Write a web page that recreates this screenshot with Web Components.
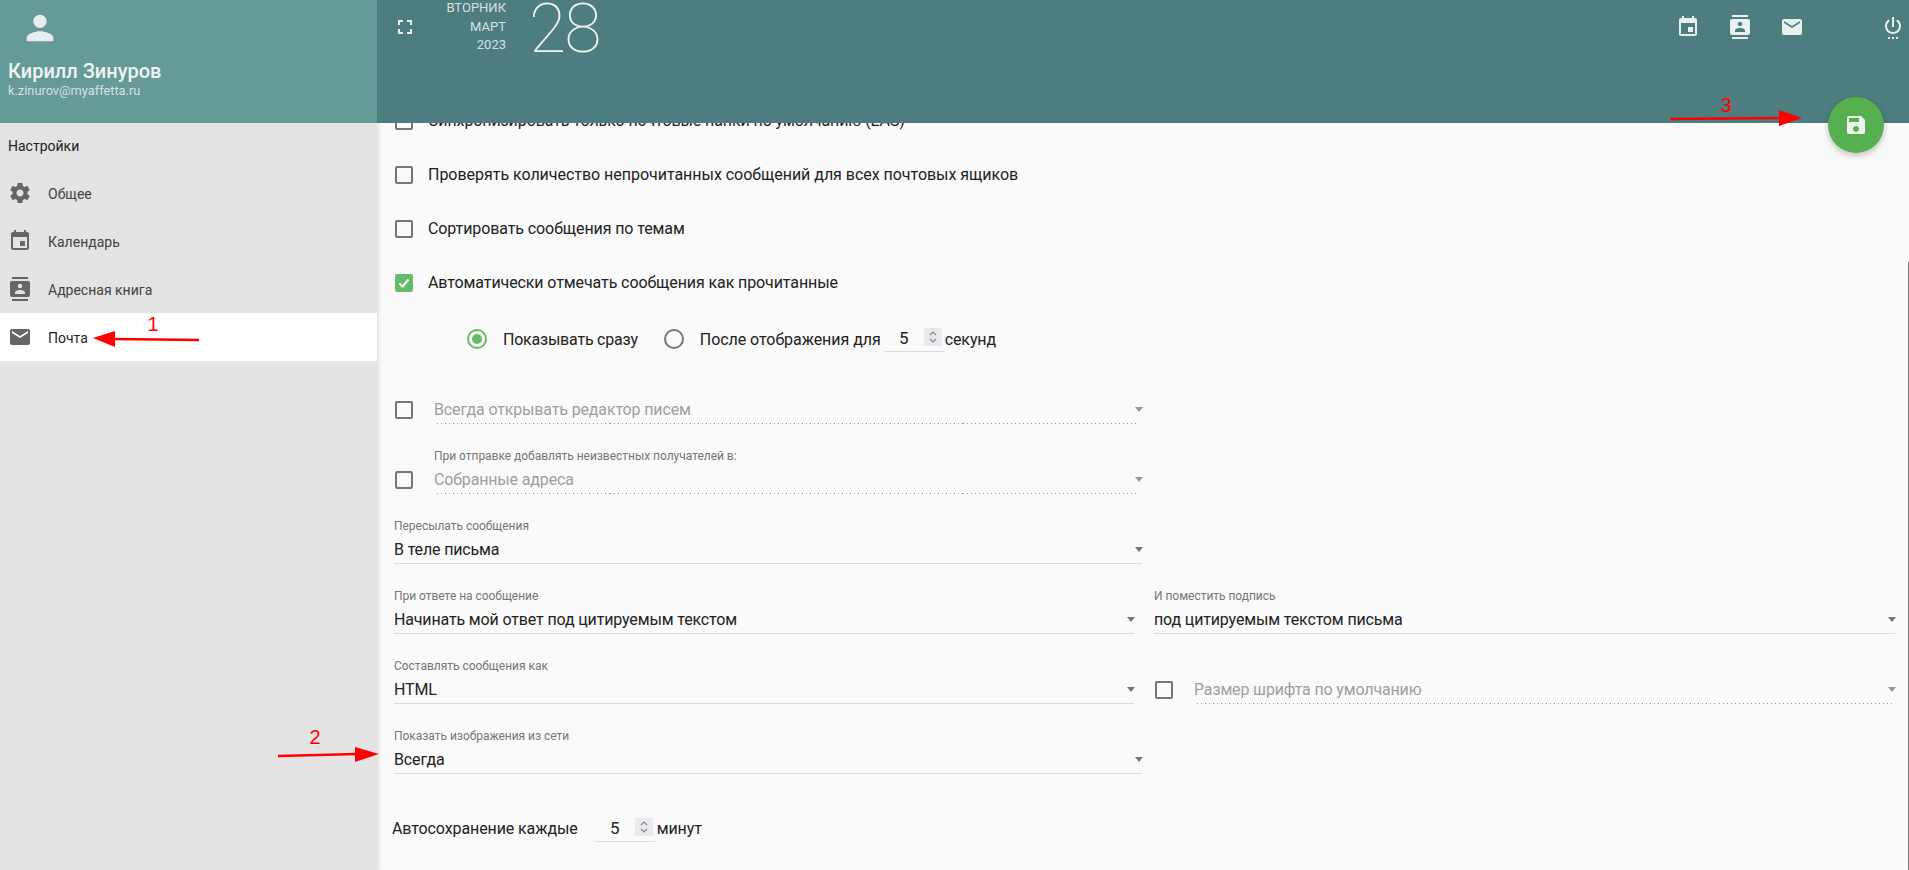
<!DOCTYPE html>
<html lang="ru">
<head>
<meta charset="utf-8">
<title>Настройки</title>
<style>
  html, body { margin: 0; height: 100%; overflow: hidden; }
  body { font-family: Roboto, "Noto Sans", sans-serif; background: #fafafa; }
</style>
</head>
<body>
<mail-settings-app></mail-settings-app>

<script>
const ICONS = {
  person: "M12 12c2.21 0 4-1.79 4-4s-1.79-4-4-4-4 1.79-4 4 1.79 4 4 4zm0 2c-2.67 0-8 1.34-8 4v2h16v-2c0-2.66-5.33-4-8-4z",
  gear: "M19.43 12.98c.04-.32.07-.64.07-.98s-.03-.66-.07-.98l2.11-1.65c.19-.15.24-.42.12-.64l-2-3.46c-.12-.22-.39-.3-.61-.22l-2.49 1c-.52-.4-1.08-.73-1.69-.98l-.38-2.65C14.46 2.18 14.25 2 14 2h-4c-.25 0-.46.18-.49.42l-.38 2.65c-.61.25-1.17.59-1.69.98l-2.49-1c-.23-.09-.49 0-.61.22l-2 3.46c-.13.22-.07.49.12.64l2.11 1.65c-.04.32-.07.65-.07.98s.03.66.07.98l-2.11 1.65c-.19.15-.24.42-.12.64l2 3.46c.12.22.39.3.61.22l2.49-1c.52.4 1.08.73 1.69.98l.38 2.65c.03.24.24.42.49.42h4c.25 0 .46-.18.49-.42l.38-2.65c.61-.25 1.17-.59 1.69-.98l2.49 1c.23.09.49 0 .61-.22l2-3.46c.12-.22.07-.49-.12-.64l-2.11-1.65zM12 15.5c-1.93 0-3.5-1.57-3.5-3.5s1.57-3.5 3.5-3.5 3.5 1.57 3.5 3.5-1.57 3.5-3.5 3.5z",
  event: "M17 12h-5v5h5v-5zM16 1v2H8V1H6v2H5c-1.11 0-1.99.9-1.99 2L3 19c0 1.1.89 2 2 2h14c1.1 0 2-.9 2-2V5c0-1.1-.9-2-2-2h-1V1h-2zm3 18H5V8h14v11z",
  contacts: "M20 0H4v2h16V0zM4 24h16v-2H4v2zM20 4H4c-1.1 0-2 .9-2 2v12c0 1.1.9 2 2 2h16c1.1 0 2-.9 2-2V6c0-1.1-.9-2-2-2zm-8 2.75c1.24 0 2.25 1.01 2.25 2.25s-1.01 2.25-2.25 2.25S9.75 10.24 9.75 9 10.76 6.75 12 6.75zM17 17H7v-1.5c0-1.67 3.33-2.5 5-2.5s5 .83 5 2.5V17z",
  mail: "M20 4H4c-1.1 0-1.99.9-1.99 2L2 18c0 1.1.9 2 2 2h16c1.1 0 2-.9 2-2V6c0-1.1-.9-2-2-2zm0 4l-8 5-8-5V6l8 5 8-5v2z",
  fullscreen: "M7 14H5v5h5v-2H7v-3zm-2-4h2V7h3V5H5v5zm12 7h-3v2h5v-5h-2v3zM14 5v2h3v3h2V5h-5z",
  power: "M7 24h2v-2H7v2zm4 0h2v-2h-2v2zm2-22h-2v10h2V2zm3.56 2.44l-1.45 1.45C16.84 6.94 18 8.83 18 11c0 3.31-2.69 6-6 6s-6-2.69-6-6c0-2.17 1.16-4.06 2.88-5.12L7.44 4.44C5.36 5.88 4 8.28 4 11c0 4.42 3.58 8 8 8s8-3.58 8-8c0-2.72-1.36-5.12-3.44-6.56zM15 24h2v-2h-2v2z",
  save: "M17 3H5c-1.11 0-2 .9-2 2v14c0 1.1.89 2 2 2h14c1.1 0 2-.9 2-2V7l-4-4zm-5 16c-1.66 0-3-1.34-3-3s1.34-3 3-3 3 1.34 3 3-1.34 3-3 3zm3-10H5V5h10v4z"
};

class MdIcon extends HTMLElement {
  constructor() {
    super();
    this.attachShadow({ mode: "open" });
  }

  connectedCallback() {
    const size = this.getAttribute("size") || 24;
    this.shadowRoot.innerHTML = `
      <style>
        :host { display: inline-flex; flex: none; width: ${size}px; height: ${size}px; color: inherit; }
        svg { width: 100%; height: 100%; fill: currentColor; display: block; }
      </style>
      <svg viewBox="0 0 24 24"><path d="${ICONS[this.getAttribute("name")]}"></path></svg>`;
  }
}

class NavItem extends HTMLElement {
  constructor() {
    super();
    this.attachShadow({ mode: "open" });
  }

  connectedCallback() {
    const active = this.hasAttribute("active");
    this.shadowRoot.innerHTML = `
      <style>
        :host {
          display: flex;
          align-items: center;
          gap: 16px;
          height: 48px;
          padding-left: 8px;
          font-size: 14px;
          color: ${active ? "#212121" : "#424242"};
          background: ${active ? "#fff" : "transparent"};
        }
        md-icon { color: #666; }
        span { padding-top: 1px; }
      </style>
      <md-icon name="${this.getAttribute("icon")}"></md-icon>
      <span><slot></slot></span>`;
  }
}

class SideBar extends HTMLElement {
  constructor() {
    super();
    this.attachShadow({ mode: "open" });
  }

  connectedCallback() {
    this.shadowRoot.innerHTML = `
      <style>
        :host { display: flex; flex-direction: column; background: #e4e4e4; }
        header {
          height: 123px;
          box-sizing: border-box;
          padding: 8px 8px 0;
          background: #659a96;
          color: #fff;
        }
        md-icon { display: flex; margin-left: 12px; color: #e6efee; }
        .name { font-size: 20px; font-weight: 500; line-height: 24px; margin-top: 11px; color: #f1f6f5; }
        .email { font-size: 12.8px; line-height: 16px; margin-top: 0; color: #d5e4e2; }
        .title { font-size: 14px; color: #212121; line-height: 46px; padding-left: 8px; }
      </style>
      <header>
        <md-icon name="person" size="40"></md-icon>
        <div class="name">Кирилл Зинуров</div>
        <div class="email">k.zinurov@myaffetta.ru</div>
      </header>
      <div class="title">Настройки</div>
      <nav>
        <nav-item icon="gear">Общее</nav-item>
        <nav-item icon="event">Календарь</nav-item>
        <nav-item icon="contacts">Адресная книга</nav-item>
        <nav-item icon="mail" active>Почта</nav-item>
      </nav>`;
  }
}

class TopBar extends HTMLElement {
  constructor() {
    super();
    this.attachShadow({ mode: "open" });
  }

  connectedCallback() {
    this.shadowRoot.innerHTML = `
      <style>
        :host {
          display: flex;
          height: 123px;
          background: #4d7d7e;
          color: #e8f0f0;
          padding-left: 16px;
          position: relative;
          z-index: 2;
        }
        .full { margin-top: 15px; }
        .date {
          display: flex;
          flex-direction: column;
          gap: 2.5px;
          width: 89px;
          text-align: right;
          font-size: 13px;
          line-height: 16px;
          color: #d5e3e2;
        }
        .day {
          font-size: 68px;
          font-weight: 100;
          line-height: 59px;
          letter-spacing: -2px;
          margin-left: 23px;
          color: #f1f6f5;
        }
        .actions { display: flex; margin-left: auto; align-items: flex-start; padding-top: 15px; }
        .actions md-icon { margin-right: 28px; }
        .actions .power { margin: 0 4px 0 49px; }
      </style>
      <md-icon class="full" name="fullscreen"></md-icon>
      <div class="date"><div>ВТОРНИК</div><div>МАРТ</div><div>2023</div></div>
      <div class="day">28</div>
      <div class="actions">
        <md-icon name="event"></md-icon>
        <md-icon name="contacts"></md-icon>
        <md-icon name="mail"></md-icon>
        <md-icon class="power" name="power"></md-icon>
      </div>`;
  }
}

class CheckBox extends HTMLElement {
  constructor() {
    super();
    this.attachShadow({ mode: "open" });
  }

  connectedCallback() {
    const checked = this.hasAttribute("checked");
    this.shadowRoot.innerHTML = `
      <style>
        :host {
          display: block;
          flex: none;
          width: 18px;
          height: 18px;
          box-sizing: border-box;
          border-radius: 2px;
          border: 2px solid ${checked ? "#66bb6a" : "#757575"};
          background: ${checked ? "#66bb6a" : "transparent"};
        }
        svg { display: block; width: 14px; height: 14px; fill: none; stroke: #fff; stroke-width: 2; }
      </style>
      ${checked ? `<svg viewBox="0 0 14 14"><path d="M2.5 7.5l3 3 6-7"></path></svg>` : ""}`;
  }
}

class CheckRow extends HTMLElement {
  constructor() {
    super();
    this.attachShadow({ mode: "open" });
  }

  connectedCallback() {
    this.shadowRoot.innerHTML = `
      <style>
        :host {
          display: flex;
          align-items: center;
          gap: 15px;
          height: 54px;
          padding-left: 1px;
          font-size: 16px;
          color: #212121;
        }
        span { margin-top: -1px; }
      </style>
      <check-box ${this.hasAttribute("checked") ? "checked" : ""}></check-box>
      <span><slot></slot></span>`;
  }
}

class RadioDot extends HTMLElement {
  constructor() {
    super();
    this.attachShadow({ mode: "open" });
  }

  connectedCallback() {
    const on = this.hasAttribute("on");
    this.shadowRoot.innerHTML = `
      <style>
        :host {
          display: flex;
          flex: none;
          align-items: center;
          justify-content: center;
          width: 20px;
          height: 20px;
          box-sizing: border-box;
          border-radius: 50%;
          border: 2px solid ${on ? "#66bb6a" : "#757575"};
        }
        i { width: 10px; height: 10px; border-radius: 50%; background: #66bb6a; }
      </style>
      ${on ? "<i></i>" : ""}`;
  }
}

class NumberBox extends HTMLElement {
  constructor() {
    super();
    this.attachShadow({ mode: "open" });
  }

  connectedCallback() {
    this.shadowRoot.innerHTML = `
      <style>
        :host {
          display: flex;
          flex: none;
          box-sizing: border-box;
          width: 60px;
          height: 30px;
          margin-bottom: 5px;
          padding: 0 2px 0 0;
          border-bottom: 1px solid #dcdcdc;
          font-size: 17px;
          color: #212121;
        }
        .val { flex: 1; text-align: center; line-height: 32px; height: 29px; }
        .spin { width: 18px; height: 18px; margin-top: 6px; background: #e9e9ee; }
        svg { display: block; width: 18px; height: 18px; fill: none; stroke: #85858c; stroke-width: 1.2; }
      </style>
      <div class="val"><slot></slot></div>
      <div class="spin"><svg viewBox="0 0 18 18"><path d="M6 7l3-3 3 3M6 11l3 3 3-3"></path></svg></div>`;
  }
}

class SelectField extends HTMLElement {
  constructor() {
    super();
    this.attachShadow({ mode: "open" });
  }

  connectedCallback() {
    const label = this.getAttribute("label") || "";
    const off = this.hasAttribute("disabled");
    this.shadowRoot.innerHTML = `
      <style>
        :host {
          display: block;
          box-sizing: border-box;
          height: 54px;
          padding-top: 8px;
          min-width: 0;
        }
        .label { height: 16px; line-height: 16px; font-size: 12px; color: #757575; margin-bottom: 3px; letter-spacing: -0.03px; }
        .control {
          display: flex;
          align-items: center;
          justify-content: space-between;
          height: 25px;
          padding-bottom: 1px;
          font-size: 16px;
          letter-spacing: -0.15px;
          border-bottom: 1px solid ${off ? "transparent" : "#dcdcdc"};
          color: ${off ? "#9e9e9e" : "#212121"};
          ${off ? "border-image: repeating-linear-gradient(to right, #999 0 1px, transparent 1px 4px) 1;" : ""}
        }
        .arrow {
          width: 0;
          height: 0;
          border: 4.5px solid transparent;
          border-top: 5px solid ${off ? "#999" : "#757575"};
          border-bottom-width: 0;
          margin-right: ${off ? "-4px" : "-1px"};
        }
      </style>
      <div class="label">${label}</div>
      <div class="control"><span><slot></slot></span><i class="arrow"></i></div>`;
  }
}

class SettingsForm extends HTMLElement {
  constructor() {
    super();
    this.attachShadow({ mode: "open" });
  }

  connectedCallback() {
    this.shadowRoot.innerHTML = `
      <style>
        :host {
          display: block;
          height: 100%;
          overflow: hidden;
          box-sizing: border-box;
          padding: 0 14px 0 17px;
          background: #fafafa;
          box-shadow: inset 4px 0 4px -3px rgba(0,0,0,.14);
          position: relative;
          font-size: 16px;
          color: #212121;
          letter-spacing: -0.1px;
        }
        .scroll { margin-top: -29px; }
        .tight { letter-spacing: -0.03px; }
        .radios { display: flex; align-items: center; height: 60px; padding-left: 73px; margin-top: -1px; margin-bottom: 1px; }
        .radios radio-dot:nth-of-type(2) { margin-left: 26px; }
        .radios span { margin-left: 16px; }
        .radios .first { letter-spacing: -0.22px; }
        .radios .second { letter-spacing: -0.05px; margin-right: 3px; }
        .radios span.last { margin-left: 1px; }
        .row { display: flex; height: 70px; }
        .col { width: 748px; flex: none; }
        .col.half { width: 741px; }
        .col.first { width: 740px; margin-right: 1px; }
        .gap { margin-left: 19px; }
        .with-check { display: flex; }
        .with-check check-box { margin: 31px 21px 0 1px; }
        .with-check select-field { flex: 1; margin-right: 3px; }
        .auto { display: flex; align-items: center; height: 33px; margin: 22px 0 0 -2px; }
        .auto number-box { margin-bottom: 3px; }
        .auto span:first-child { margin-right: 17px; }
        .auto .last { margin-left: 2px; }
      </style>
      <div class="scroll">
        <check-row>Синхронизировать только почтовые папки по умолчанию (EAS)</check-row>
        <check-row class="tight">Проверять количество непрочитанных сообщений для всех почтовых ящиков</check-row>
        <check-row>Сортировать сообщения по темам</check-row>
        <check-row checked>Автоматически отмечать сообщения как прочитанные</check-row>
        <div class="radios">
          <radio-dot on></radio-dot><span class="first">Показывать сразу</span>
          <radio-dot></radio-dot><span class="second">После отображения для</span>
          <number-box>5</number-box><span class="last">секунд</span>
        </div>
        <div class="row"><div class="col with-check"><check-box></check-box><select-field disabled>Всегда открывать редактор писем</select-field></div></div>
        <div class="row"><div class="col with-check"><check-box></check-box><select-field disabled label="При отправке добавлять неизвестных получателей в:">Собранные адреса</select-field></div></div>
        <div class="row"><select-field class="col" label="Пересылать сообщения">В теле письма</select-field></div>
        <div class="row">
          <select-field class="col half first" label="При ответе на сообщение">Начинать мой ответ под цитируемым текстом</select-field>
          <select-field class="col half gap" label="И поместить подпись">под цитируемым текстом письма</select-field>
        </div>
        <div class="row">
          <select-field class="col half first" label="Составлять сообщения как">HTML</select-field>
          <div class="col half gap with-check"><check-box></check-box><select-field disabled>Размер шрифта по умолчанию</select-field></div>
        </div>
        <div class="row"><select-field class="col" label="Показать изображения из сети">Всегда</select-field></div>
        <div class="auto"><span>Автосохранение каждые</span><number-box>5</number-box><span class="last">минут</span></div>
      </div>`;
  }
}

class SaveFab extends HTMLElement {
  constructor() {
    super();
    this.attachShadow({ mode: "open" });
  }

  connectedCallback() {
    this.shadowRoot.innerHTML = `
      <style>
        :host {
          position: absolute;
          left: 1828px;
          top: 97px;
          z-index: 3;
          width: 56px;
          height: 56px;
          display: flex;
          align-items: center;
          justify-content: center;
          border-radius: 50%;
          background: #57b04f;
          color: #eef7ed;
          box-shadow: 0 3px 6px rgba(0,0,0,.22);
        }
      </style>
      <md-icon name="save"></md-icon>`;
  }
}

// red arrows and numbers drawn on the screenshot afterwards
class ArrowNotes extends HTMLElement {
  constructor() {
    super();
    this.attachShadow({ mode: "open" });
  }

  connectedCallback() {
    this.shadowRoot.innerHTML = `
      <style>
        :host { position: absolute; inset: 0; z-index: 4; pointer-events: none; }
        svg { position: absolute; inset: 0; width: 100%; height: 100%; }
        b {
          position: absolute;
          font: 400 20px/20px "Liberation Sans", sans-serif;
          color: #f00;
          transform: translate(-50%, -50%);
        }
      </style>
      <svg viewBox="0 0 1909 870">
        <g stroke="#f00" stroke-width="2.5" fill="#f00">
          <path d="M199 340L113 339"></path>
          <path d="M93 338L115 331V347Z" stroke="none"></path>
          <path d="M278 756L357 754"></path>
          <path d="M379 754L355 747V762Z" stroke="none"></path>
          <path d="M1670 119L1781 118"></path>
          <path d="M1802 118L1779 110V126Z" stroke="none"></path>
        </g>
      </svg>
      <b style="left:153px;top:324px">1</b>
      <b style="left:315px;top:737px">2</b>
      <b style="left:1726px;top:105px">3</b>`;
  }
}

class MailSettingsApp extends HTMLElement {
  constructor() {
    super();
    this.attachShadow({ mode: "open" });
  }

  connectedCallback() {
    this.shadowRoot.innerHTML = `
      <style>
        :host {
          display: grid;
          grid-template-columns: 377px 1fr;
          height: 100vh;
          position: relative;
          overflow: hidden;
        }
        .main { display: flex; flex-direction: column; min-width: 0; height: 100vh; }
        settings-form { flex: 1; min-height: 0; }
        .track { position: absolute; right: 0; top: 262px; bottom: 0; width: 1px; background: #777; }
      </style>
      <side-bar></side-bar>
      <div class="main">
        <top-bar></top-bar>
        <settings-form></settings-form>
      </div>
      <div class="track"></div>
      <save-fab></save-fab>
      <arrow-notes></arrow-notes>`;
  }
}

customElements.define("md-icon", MdIcon);
customElements.define("nav-item", NavItem);
customElements.define("side-bar", SideBar);
customElements.define("top-bar", TopBar);
customElements.define("check-box", CheckBox);
customElements.define("check-row", CheckRow);
customElements.define("radio-dot", RadioDot);
customElements.define("number-box", NumberBox);
customElements.define("select-field", SelectField);
customElements.define("settings-form", SettingsForm);
customElements.define("save-fab", SaveFab);
customElements.define("arrow-notes", ArrowNotes);
customElements.define("mail-settings-app", MailSettingsApp);
</script>
</body>
</html>
